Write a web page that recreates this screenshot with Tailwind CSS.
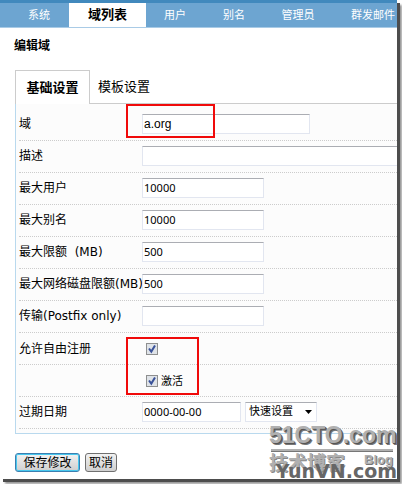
<!DOCTYPE html>
<html lang="zh-CN">
<head>
    <meta charset="UTF-8">
    <meta name="viewport" content="width=device-width, initial-scale=1.0">
    <title>编辑域</title>
    <script src="https://cdn.jsdelivr.net/npm/@tailwindcss/browser@4"></script>
</head>
<body class="min-h-screen pb-[5px] bg-white overflow-hidden text-xs text-black font-['DejaVu_Sans','Noto_Sans_CJK_SC',sans-serif]">
    <div class="relative mr-[5px] pb-[7px] bg-white shadow-[3px_3px_0_#4d4d4d,5px_5px_2px_#999]">

        <nav class="flex h-7 border-t-[3px] border-t-[#4189bd] border-b border-b-[#a9cbe6] bg-[#6da5d1] text-[11px] leading-6 text-white whitespace-nowrap overflow-hidden font-['Liberation_Sans','Noto_Sans_CJK_SC',sans-serif]">
            <a href="#" class="w-[69px] pl-7 shrink-0">系统</a>
            <a href="#" class="w-[77px] h-[25px] shrink-0 bg-white text-center text-[13px] font-bold text-black">域列表</a>
            <a href="#" class="w-[58px] text-center shrink-0">用户</a>
            <a href="#" class="w-[60px] text-center shrink-0">别名</a>
            <a href="#" class="w-[68px] text-center shrink-0">管理员</a>
            <a href="#" class="pl-[19px] shrink-0">群发邮件</a>
        </nav>

        <h1 class="mt-2 ml-[14px] text-xs leading-5 font-bold">编辑域</h1>

        <div class="mt-[14px] ml-[15px] flex items-end text-[13px]">
            <button type="button" class="w-[75px] h-[34px] border border-b-0 border-[#ccc] text-center font-bold">基础设置</button>
            <div class="flex-1 h-[34px] border-b border-[#ccc]">
                <button type="button" class="h-[33px] pl-2">模板设置</button>
            </div>
        </div>

        <form>
            <div class="ml-[15px] pt-[5px] pl-[3px] pb-1 border-l border-b border-[#b9d9ee] bg-[#fcfcfc]">
                <div class="relative flex h-8 pb-[2px] items-center border-b border-dotted border-[#ccc]">
                    <label for="domain" class="w-[123px] shrink-0">域</label>
                    <input id="domain" type="text" value="a.org" class="w-[168px] h-5 px-px border border-[#e2e6f0] border-t-[#abadb3] bg-white text-xs font-['Liberation_Sans',sans-serif]">
                    <div class="absolute left-[107px] -top-[5px] w-[89px] h-[34px] border-2 border-[#f00a0a] pointer-events-none"></div>
                </div>
                <div class="flex h-8 pb-[2px] items-center border-b border-dotted border-[#ccc] overflow-hidden">
                    <label for="desc" class="w-[123px] shrink-0">描述</label>
                    <input id="desc" type="text" class="flex-1 min-w-0 h-5 px-px border border-r-0 border-[#e2e6f0] border-t-[#abadb3] bg-white text-[11px] font-['Noto_Sans',sans-serif]">
                </div>
                <div class="flex h-8 pb-[2px] items-center border-b border-dotted border-[#ccc]">
                    <label for="maxuser" class="w-[123px] shrink-0">最大用户</label>
                    <input id="maxuser" type="text" value="10000" class="w-[122px] h-5 px-px border border-[#e2e6f0] border-t-[#abadb3] bg-white text-[11px] font-['Noto_Sans',sans-serif]">
                </div>
                <div class="flex h-8 pb-[2px] items-center border-b border-dotted border-[#ccc]">
                    <label for="maxalias" class="w-[123px] shrink-0">最大别名</label>
                    <input id="maxalias" type="text" value="10000" class="w-[122px] h-5 px-px border border-[#e2e6f0] border-t-[#abadb3] bg-white text-[11px] font-['Noto_Sans',sans-serif]">
                </div>
                <div class="flex h-8 pb-[2px] items-center border-b border-dotted border-[#ccc]">
                    <label for="maxquota" class="w-[123px] shrink-0">最大限额&nbsp; (MB)</label>
                    <input id="maxquota" type="text" value="500" class="w-[122px] h-5 px-px border border-[#e2e6f0] border-t-[#abadb3] bg-white text-[11px] font-['Noto_Sans',sans-serif]">
                </div>
                <div class="flex h-8 pb-[2px] items-center border-b border-dotted border-[#ccc]">
                    <label for="maxdisk" class="w-[123px] shrink-0 whitespace-nowrap">最大网络磁盘限额(MB)</label>
                    <input id="maxdisk" type="text" value="500" class="w-[122px] h-5 px-px border border-[#e2e6f0] border-t-[#abadb3] bg-white text-[11px] font-['Noto_Sans',sans-serif]">
                </div>
                <div class="flex h-8 pb-[2px] items-center border-b border-dotted border-[#ccc]">
                    <label for="transport" class="w-[123px] shrink-0">传输(Postfix only)</label>
                    <input id="transport" type="text" class="w-[122px] h-5 px-px border border-[#e2e6f0] border-t-[#abadb3] bg-white text-[11px] font-['Noto_Sans',sans-serif]">
                </div>

                <!-- checkboxes -->
                <div class="relative flex h-8 items-center border-b border-dotted border-[#ccc]">
                    <label for="register" class="w-[123px] shrink-0">允许自由注册</label>
                    <span class="relative ml-1 w-3 h-3">
                        <input id="register" type="checkbox" checked class="block w-3 h-3 appearance-none border border-[#8e8f8f] bg-[#dfe3e8]">
                        <svg class="absolute inset-0 w-3 h-3 pointer-events-none" viewBox="0 0 12 12" fill="none" stroke="#3a5299" stroke-width="2"><path d="M3 5.5 L5.3 8.6 L9 2.5"/></svg>
                    </span>
                    <div class="absolute left-[107px] top-1 z-10 w-[73px] h-[58px] border-2 border-[#f00a0a] pointer-events-none"></div>
                </div>
                <div class="flex h-8 items-center border-b border-dotted border-[#ccc]">
                    <span class="w-[123px] shrink-0"></span>
                    <span class="relative ml-1 w-3 h-3">
                        <input id="active" type="checkbox" checked class="block w-3 h-3 appearance-none border border-[#8e8f8f] bg-[#dfe3e8]">
                        <svg class="absolute inset-0 w-3 h-3 pointer-events-none" viewBox="0 0 12 12" fill="none" stroke="#3a5299" stroke-width="2"><path d="M3 5.5 L5.3 8.6 L9 2.5"/></svg>
                    </span>
                    <label for="active" class="ml-[3px] pt-1 text-[11px]">激活</label>
                </div>

                <div class="flex h-8 pb-[2px] items-center border-b border-dotted border-[#ccc]">
                    <label for="expire" class="w-[123px] shrink-0">过期日期</label>
                    <input id="expire" type="text" value="0000-00-00" class="w-[99px] h-5 px-px border border-[#e2e6f0] border-t-[#abadb3] bg-white text-[11px] font-['Noto_Sans',sans-serif]">
                    <div class="relative ml-1">
                        <select aria-label="快速设置" class="block w-[72px] h-5 pl-[3px] appearance-none border border-[#e2e6f0] border-t-[#abadb3] bg-white text-[11px] leading-[18px]">
                            <option>快速设置</option>
                        </select>
                        <svg class="absolute right-[5px] top-2 w-[7px] h-1 pointer-events-none" viewBox="0 0 7 4"><path d="M0 0h7L3.5 4z"/></svg>
                    </div>
                </div>
            </div>

            <div class="mt-[19px] ml-[15px] flex gap-[5px] text-xs leading-4">
                <button type="submit" class="w-[65px] h-[19px] rounded-[3px] border border-[#3c7fb1] bg-linear-to-b from-[#f2f2f2] to-[#cfcfcf] shadow-[inset_0_0_0_1px_#48c8ee]">保存修改</button>
                <button type="button" class="w-8 h-[19px] rounded-[3px] border border-[#707070] bg-linear-to-b from-[#f2f2f2] to-[#cfcfcf]">取消</button>
            </div>
        </form>

        <!-- watermark -->
        <div class="absolute right-0 bottom-0 w-32 h-[60px] whitespace-nowrap pointer-events-none">
            <div class="absolute left-0 top-0 text-[23px] leading-8 font-bold text-[#b0b0b0] [text-shadow:1px_1px_0_#555,2px_2px_0_#777] font-['Liberation_Sans',sans-serif]">51CTO.com</div>
            <div class="absolute left-[2px] top-[30px] w-[122px] h-[3px] border-b border-[#777] bg-[#b0b0b0]"></div>
            <div class="absolute left-0 top-[32px] text-[19px] leading-6 font-bold text-[#b0b0b0] [text-shadow:1px_1px_0_#888]">技术博客</div>
            <div class="absolute right-1 top-[33px] text-[13px] leading-4 font-bold text-[#b0b0b0] [text-shadow:1px_1px_0_#777] font-['Liberation_Sans',sans-serif]">Blog</div>
            <div class="absolute right-0 top-[40px] text-[19px] leading-6 font-bold text-[#666]">YunVN.com</div>
        </div>
    </div>
</body>
</html>
